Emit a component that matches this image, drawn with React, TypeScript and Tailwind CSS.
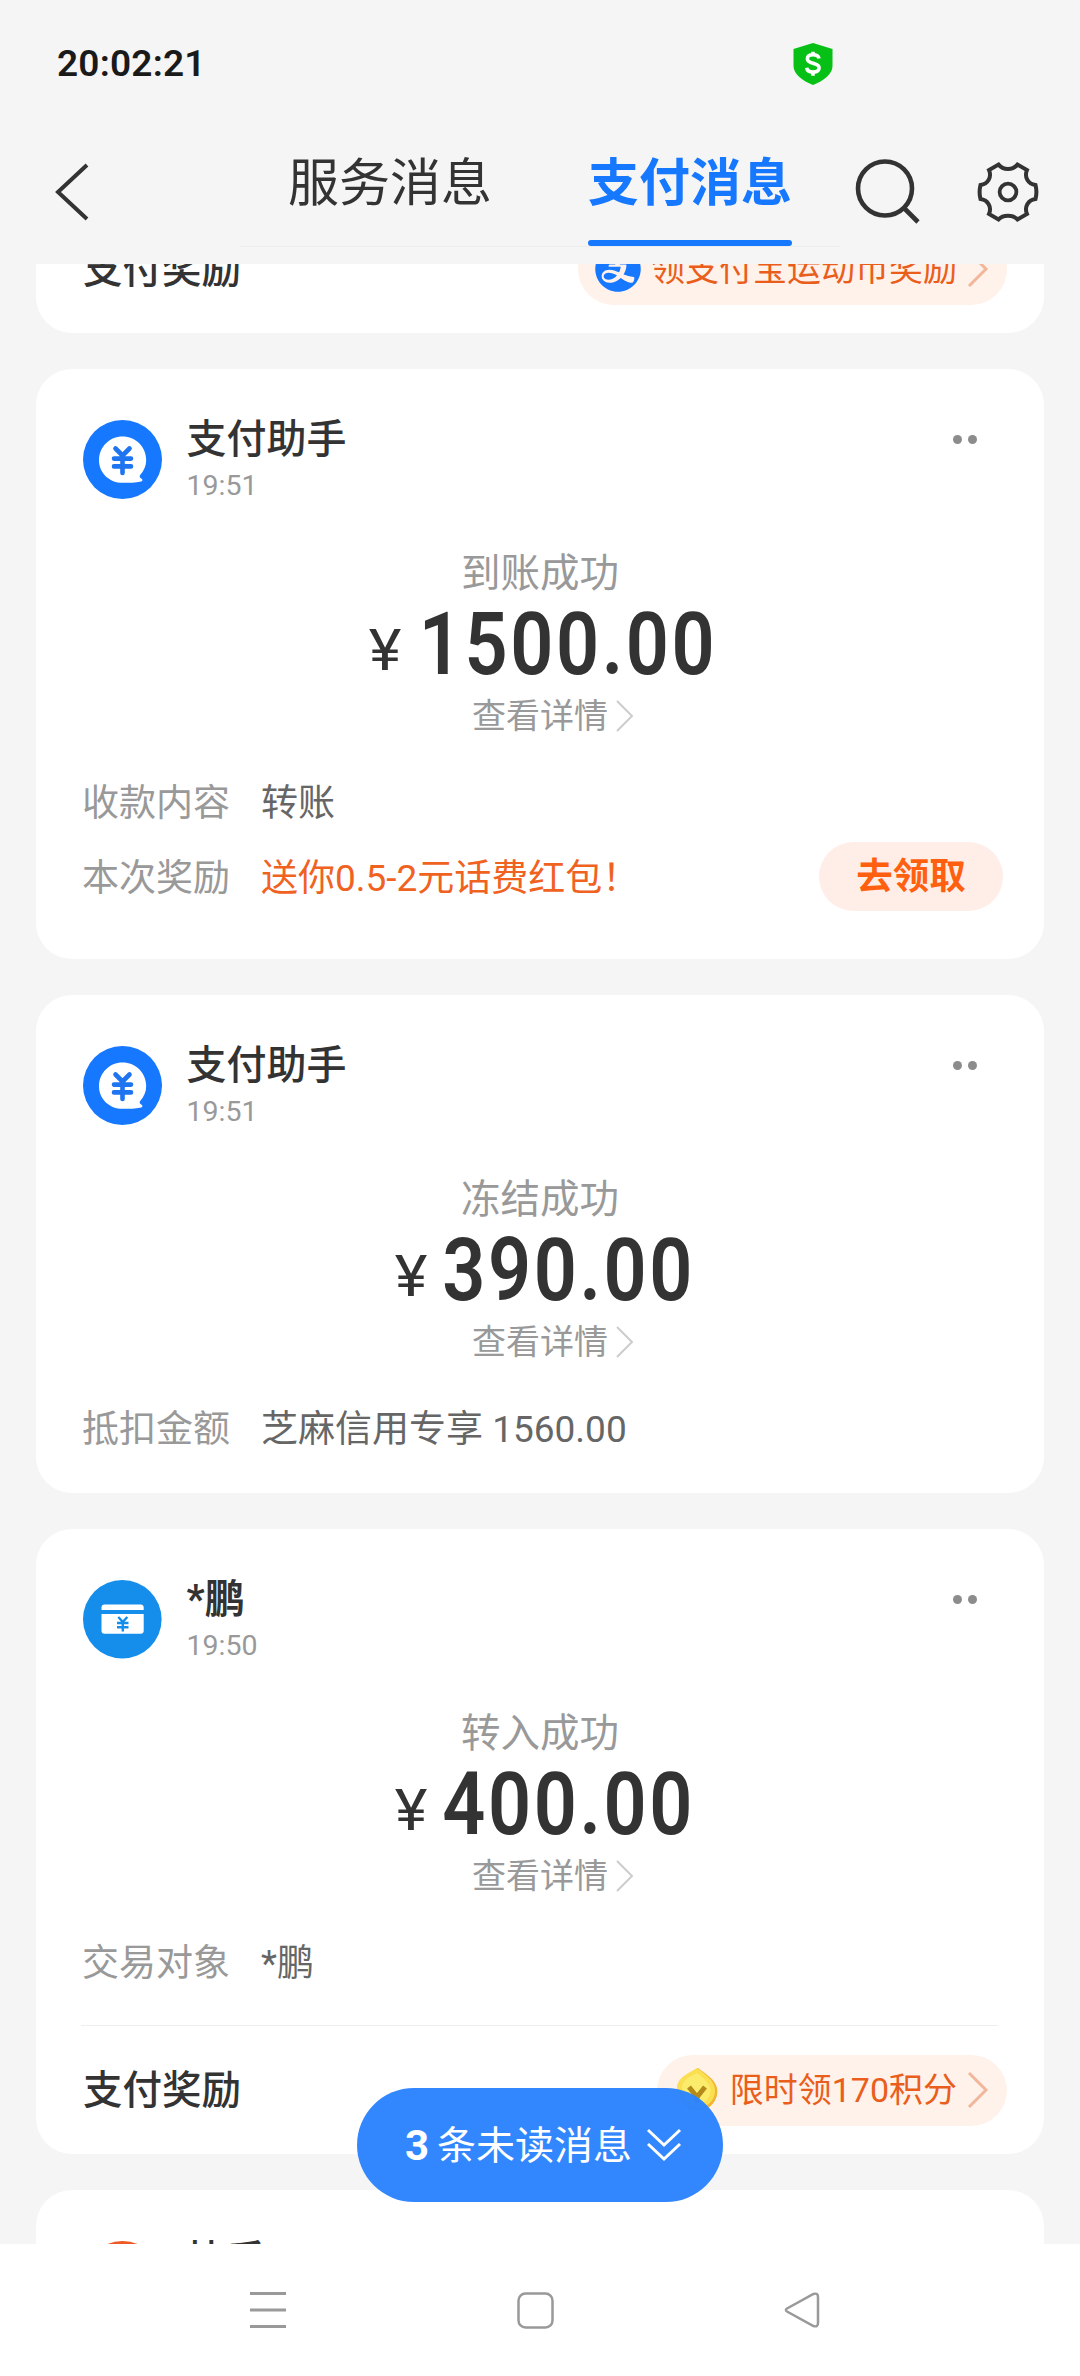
import { ReactNode } from 'react';
import { AiFillAlipayCircle } from 'react-icons/ai';

interface Row {
  label: string;
  value: string;
  highlight?: boolean;
  action?: string;
}

interface Message {
  id: number;
  avatar: ReactNode;
  name: string;
  isContact?: boolean;
  time: string;
  status: string;
  amount: string;
  rows: Row[];
  reward?: ReactNode;
}

function HelperAvatar() {
  return (
    <svg viewBox="0 0 79 79" className="w-[79px] h-[79px] shrink-0">
      <circle cx="39.5" cy="39.5" r="39.5" fill="#1677ff" />
      <path
        d="M39.5 16.5C26.5 16.5 16 27 16 40.2c0 13 10.5 22.6 23.6 22.6 6 0 13 0 18.6-1.3 1.6-.5 1.6-2 .4-2.7-1.6-1-2.4-2-1.6-3.6 4-4.6 6.2-9.5 6.2-15.3C63.2 27 52.7 16.5 39.5 16.5z"
        fill="#fff"
      />
      <path
        d="M32.5 28.5l7 7 7-7M31 38.6h17M31 46.4h17M39.5 36v17"
        fill="none"
        stroke="#1f74f0"
        strokeWidth="4.6"
        strokeLinecap="round"
        strokeLinejoin="round"
      />
    </svg>
  );
}

function CardAvatar() {
  return (
    <svg viewBox="0 0 79 79" className="w-[79px] h-[79px] shrink-0">
      <circle cx="39.3" cy="39.3" r="39.3" fill="#148eea" />
      <path d="M18.5 30v-2.6c0-1.6 1.2-2.8 2.8-2.8h36.6c1.6 0 2.8 1.2 2.8 2.8V30z" fill="#fff" />
      <path d="M18.5 34h42.2v17c0 1.6-1.2 2.8-2.8 2.8H21.3c-1.6 0-2.8-1.2-2.8-2.8z" fill="#fff" />
      <path
        d="M35.3 37l4.5 5 4.5-5M34 43h11.5M34 47.2h11.5M39.8 42v9.6"
        fill="none"
        stroke="#148eea"
        strokeWidth="2.4"
      />
    </svg>
  );
}

function CoinIcon() {
  return (
    <svg viewBox="0 0 42 46" className="w-[42px] h-[46px] ml-[3px] mr-px shrink-0">
      <path d="M21 1c3 3 17 10 19 20s-5 22-18 22S2 34 2 23 15 5 21 1z" fill="#f2b632" />
      <path d="M20 1c3 3 15 9 17.5 19s-5 21-17.5 21S0 32 0 21 14 5 20 1z" fill="#fbdf52" />
      <path d="M20 6c3 3 11 7 13 15s-4 16-13 16S5 30 5 21 15 9 20 6z" fill="#fcec6c" />
      <path d="M12 20l8 10 8-10" fill="none" stroke="#b58a1c" strokeWidth="5" />
      <path d="M20 28v8" stroke="#b58a1c" strokeWidth="5" />
    </svg>
  );
}

function RewardFooter({ icon, text }: { icon: ReactNode; text: string }) {
  return (
    <div className="flex items-center justify-between h-[128px] pl-[47px] pr-[37px]">
      <span className="pt-0.5 text-[39.5px] font-medium text-[#333333]">支付奖励</span>
      <div className="flex items-center h-[71px] rounded-full bg-[#fff2eb] pl-[17px] pr-[18px]">
        {icon}
        <span className="ml-[10px] pt-px text-[34px] text-[#ea5e1c]">{text}</span>
        <svg viewBox="0 0 22 38" className="w-[22px] h-[38px] ml-[10px]">
          <path d="M2 2l17 17L2 36" fill="none" stroke="#f2b79b" strokeWidth="3" />
        </svg>
      </div>
    </div>
  );
}

function MessageCard({ message }: { message: Message }) {
  const { avatar, name, isContact, time, status, amount, rows, reward } = message;
  const hasAction = rows.some((row) => row.action);

  return (
    <div className={`shrink-0 bg-white rounded-[36px] pt-[51px] ${hasAction ? 'pb-[45px]' : reward ? '' : 'pb-7'}`}>
      <div className="flex h-[79px] pl-[47px] pr-[67px]">
        {avatar}
        <div className="ml-[24.5px] -mt-0.5">
          <div className={`text-[40px] leading-[44px] text-[#333333] ${isContact ? 'font-bold' : 'font-medium'}`}>
            {name}
          </div>
          <div className="mt-1.5 text-[28.5px] leading-[36px] text-[#999999]">{time}</div>
        </div>
        <div className="flex gap-[6px] ml-auto mt-[15px]">
          <span className="w-[9px] h-[9px] rounded-full bg-[#8c8c8c]" />
          <span className="w-[9px] h-[9px] rounded-full bg-[#8c8c8c]" />
        </div>
      </div>

      <div className="mt-[51px] text-center text-[39.5px] leading-[48px] text-[#999999]">{status}</div>
      <div className="mt-1 pl-[31px] h-[84px] flex justify-center text-[#333333]">
        <span className="text-[58px] leading-[96px] origin-right scale-x-[1.07]">¥</span>
        <span className="-ml-[5px] text-[87px] leading-[84px] font-semibold tracking-[3px] scale-x-[0.868]">
          {amount}
        </span>
      </div>
      <div className="mt-[10px] h-[40px] flex justify-center items-center text-[34px] text-[#999999]">
        <span className="ml-[27px]">查看详情</span>
        <svg viewBox="0 0 20 32" className="w-5 h-8 ml-[7px]">
          <path d="M2 1l15 15L2 31" fill="none" stroke="#cccccc" strokeWidth="2" />
        </svg>
      </div>

      <div className="mt-7">
        {rows.map((row) => (
          <div key={row.label} className="flex items-center h-[75px] pl-[46px] pr-[41px] text-[37px]">
            <span className="w-[179px] pt-1 text-[#999999]">{row.label}</span>
            <span className={`pt-1 ${row.highlight ? 'text-[#f0621f]' : 'text-[#666666]'}`}>{row.value}</span>
            {row.action && (
              <button className="ml-auto w-[184px] h-[69px] pt-0.5 rounded-full bg-[#ffeee8] text-[36.5px] font-bold text-[#ff6010]">
                {row.action}
              </button>
            )}
          </div>
        ))}
      </div>

      {reward && (
        <>
          <div className="mt-[26px] ml-[45px] mr-[46px] h-px bg-[#eeeeee]" />
          {reward}
        </>
      )}
    </div>
  );
}

const messages: Message[] = [
  {
    id: 1,
    avatar: <HelperAvatar />,
    name: '支付助手',
    time: '19:51',
    status: '到账成功',
    amount: '1500.00',
    rows: [
      { label: '收款内容', value: '转账' },
      { label: '本次奖励', value: '送你0.5-2元话费红包！', highlight: true, action: '去领取' },
    ],
  },
  {
    id: 2,
    avatar: <HelperAvatar />,
    name: '支付助手',
    time: '19:51',
    status: '冻结成功',
    amount: '390.00',
    rows: [{ label: '抵扣金额', value: '芝麻信用专享 1560.00' }],
  },
  {
    id: 3,
    avatar: <CardAvatar />,
    name: '*鹏',
    isContact: true,
    time: '19:50',
    status: '转入成功',
    amount: '400.00',
    rows: [{ label: '交易对象', value: '*鹏' }],
    reward: <RewardFooter icon={<CoinIcon />} text="限时领170积分" />,
  },
];

export default function App() {
  return (
    <div className="w-[1080px] h-[2376px] flex flex-col overflow-hidden bg-[#f5f5f5] font-['Roboto','Noto_Sans_CJK_SC',sans-serif]">
      {/* Status bar */}
      <div className="flex items-center h-[128px] pl-[57px] pr-[247px] justify-between">
        <span className="text-[37px] font-semibold tracking-[0.2px] text-[#1a1a1a]">20:02:21</span>
        <svg viewBox="0 0 40 42" className="w-10 h-[42px]">
          <path d="M20 0l19.5 6v17c0 8-9 15-19.5 19C9.5 38 .5 31 .5 23V6z" fill="#06c015" />
          <path
            d="M26 15.5c-.5-2.6-2.8-3.7-6-3.7-3.4 0-5.6 1.5-5.6 4.1 0 5.6 11.7 3 11.7 8.9 0 2.8-2.5 4.3-6 4.3s-6-1.4-6.4-4.3M20 8.8v4M20 28v4.800"
            fill="none"
            stroke="#fff"
            strokeWidth="3.6"
          />
        </svg>
      </div>

      {/* Tabs */}
      <div className="flex h-[136px] shrink-0">
        <svg viewBox="0 0 40 60" className="w-10 h-[60px] ml-[52px] mt-[34px]">
          <path d="M35 3L6 30l29 27" fill="none" stroke="#333333" strokeWidth="4" />
        </svg>
        <div className="flex w-[600px] h-[119px] ml-[148px] border-b border-[#ededed]">
          <div className="flex-1 flex justify-center text-[51px] leading-[111px] text-[#333333]">服务消息</div>
          <div className="flex-1 flex flex-col items-center text-[51px] leading-[111px] font-bold text-[#1677ff]">
            支付消息
            <div className="mt-px w-[204px] h-[6px] shrink-0 rounded-full bg-[#1677ff]" />
          </div>
        </div>
        <svg viewBox="0 0 66 68" className="w-[66px] h-[68px] ml-[14px] mt-[30px]">
          <circle cx="31" cy="30.5" r="27" fill="none" stroke="#333333" strokeWidth="4.6" />
          <path d="M50 50l14 14" stroke="#333333" strokeWidth="4.6" />
        </svg>
        <svg viewBox="-31 -31 62 62" className="w-[62px] h-[62px] ml-[57px] mt-[33px]">
          <path
            d="M-9.5 -27.5C-5 -21.5 5 -21.5 9.5 -27.5L19 -22C16 -15 20 -8 27.5 -7A28 28 0 0 1 27.5 7C20 8 16 15 19 22L9.5 27.5C5 22.5 -5 22.5 -9.5 27.5L-19 22C-16 15 -20 8 -27.5 7A28 28 0 0 1 -27.5 -7C-20 -8 -16 -15 -19 -22Z"
            fill="none"
            stroke="#333333"
            strokeWidth="4"
          />
          <circle r="8.4" fill="none" stroke="#333333" strokeWidth="3.8" />
        </svg>
      </div>

      {/* Message list */}
      <div className="relative h-[1980px] shrink-0 overflow-hidden bg-[#f5f5f5]">
        <div className="flex flex-col gap-9 px-9">
          <div className="shrink-0 -mt-[59px] bg-white rounded-[36px]">
            <RewardFooter
              icon={<AiFillAlipayCircle className="w-[52px] h-[52px] -mx-[3px] text-[#1677ff]" />}
              text="领支付宝运动币奖励"
            />
          </div>
          {messages.map((message) => (
            <MessageCard key={message.id} message={message} />
          ))}
          <div className="flex shrink-0 h-[200px] bg-white rounded-[36px] pt-[51px] pl-[47px]">
            <div className="w-[79px] h-[79px] rounded-full bg-[#ee5a26]" />
            <div className="ml-[24.5px] -mt-0.5 text-[40px] leading-[44px] font-medium text-[#333333]">快手</div>
          </div>
        </div>

        <button className="absolute left-[357px] top-[1824px] w-[366px] h-[114px] rounded-full bg-[#2b83ff]/97 flex items-center pl-[48px] text-[39px] text-white">
          <span className="text-[42px] font-bold">3</span>
          <span className="ml-[8px] pt-0.5">条未读消息</span>
          <svg viewBox="0 0 36 34" className="w-9 h-[34px] ml-[14px]">
            <path d="M2 2l16 15L34 2M2 16l16 15 16-15" fill="none" stroke="#fff" strokeWidth="3" />
          </svg>
        </button>
      </div>

      {/* System navigation */}
      <div className="flex justify-between items-center flex-1 bg-white pl-[249px] pr-[259px]">
        <svg viewBox="0 0 38 38" className="w-[38px] h-[38px]">
          <path d="M1 2.5h36M1 19h36M1 35.5h36" stroke="#999999" strokeWidth="3" />
        </svg>
        <svg viewBox="0 0 38 38" className="w-[38px] h-[38px]">
          <rect x="2.5" y="2.5" width="34" height="34" rx="7" fill="none" stroke="#999999" strokeWidth="2.5" />
        </svg>
        <svg viewBox="0 0 38 38" className="w-[38px] h-[38px]">
          <path
            d="M4 17.5L30.5 3q4.5-1.5 4.5 3v26q0 4.5-4.5 3L4 20.5q-2.2-1.5 0-3z"
            fill="none"
            stroke="#999999"
            strokeWidth="2.5"
          />
        </svg>
      </div>
    </div>
  );
}
